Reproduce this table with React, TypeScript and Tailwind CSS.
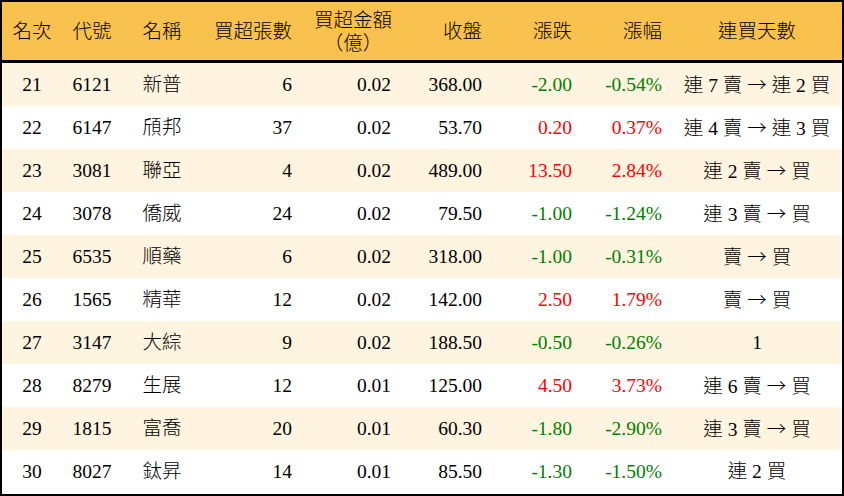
type Row = {
  rank: number
  code: string
  name: string
  lots: number
  amount: string
  close: string
  change: string
  pct: string
  streak: string
}

const rows: Row[] = [
  { rank: 21, code: "6121", name: "新普", lots: 6, amount: "0.02", close: "368.00", change: "-2.00", pct: "-0.54%", streak: "連 7 賣 → 連 2 買" },
  { rank: 22, code: "6147", name: "頎邦", lots: 37, amount: "0.02", close: "53.70", change: "0.20", pct: "0.37%", streak: "連 4 賣 → 連 3 買" },
  { rank: 23, code: "3081", name: "聯亞", lots: 4, amount: "0.02", close: "489.00", change: "13.50", pct: "2.84%", streak: "連 2 賣 → 買" },
  { rank: 24, code: "3078", name: "僑威", lots: 24, amount: "0.02", close: "79.50", change: "-1.00", pct: "-1.24%", streak: "連 3 賣 → 買" },
  { rank: 25, code: "6535", name: "順藥", lots: 6, amount: "0.02", close: "318.00", change: "-1.00", pct: "-0.31%", streak: "賣 → 買" },
  { rank: 26, code: "1565", name: "精華", lots: 12, amount: "0.02", close: "142.00", change: "2.50", pct: "1.79%", streak: "賣 → 買" },
  { rank: 27, code: "3147", name: "大綜", lots: 9, amount: "0.02", close: "188.50", change: "-0.50", pct: "-0.26%", streak: "1" },
  { rank: 28, code: "8279", name: "生展", lots: 12, amount: "0.01", close: "125.00", change: "4.50", pct: "3.73%", streak: "連 6 賣 → 買" },
  { rank: 29, code: "1815", name: "富喬", lots: 20, amount: "0.01", close: "60.30", change: "-1.80", pct: "-2.90%", streak: "連 3 賣 → 買" },
  { rank: 30, code: "8027", name: "鈦昇", lots: 14, amount: "0.01", close: "85.50", change: "-1.30", pct: "-1.50%", streak: "連 2 買" },
]

const cols = "grid grid-cols-[60px_60px_80px_100px_99px_91px_90px_90px_170px]"

// arrow drawn with the CJK font so it gets the wide full-width glyph
function Streak({ text }: { text: string }) {
  const parts = text.split("→")
  return (
    <>
      {parts.map((p, i) => (
        <span key={i}>
          {i > 0 && <span className="font-['Noto_Sans_CJK_TC',sans-serif]">→</span>}
          {p}
        </span>
      ))}
    </>
  )
}

export default function App() {
  return (
    <div className="w-[844px] h-[496px] border-2 border-black bg-white text-black text-[19.5px] font-light font-['Liberation_Serif','Noto_Sans_CJK_TC',serif] leading-none">
      {/* header */}
      <div className={`${cols} h-[61px] bg-[#f9c14e] border-b-[3px] border-black items-center`}>
        <div className="text-center pt-[2px]">名次</div>
        <div className="text-center pt-[2px]">代號</div>
        <div className="text-center pt-[2px]">名稱</div>
        <div className="text-right pr-[10px] pt-[2px]">買超張數</div>
        <div className="text-right pr-[9px]">
          <div className="inline-block text-center leading-[23px] pt-[1px]">
            買超金額
            <br />
            （億）
          </div>
        </div>
        <div className="text-right pr-[10px] pt-[2px]">收盤</div>
        <div className="text-right pr-[10px] pt-[2px]">漲跌</div>
        <div className="text-right pr-[10px] pt-[2px]">漲幅</div>
        <div className="text-center pt-[2px]">連買天數</div>
      </div>

      {/* rows */}
      {rows.map((r, i) => {
        const tone = r.change.startsWith("-") ? "text-[#008000]" : "text-[#ff0000]"
        return (
          <div
            key={r.rank}
            className={`${cols} items-center ${i === rows.length - 1 ? "h-[44px]" : "h-[43px]"} ${i % 2 === 0 ? "bg-[#fef4df]" : "bg-white"}`}
          >
            <div className="text-center">{r.rank}</div>
            <div className="text-center">{r.code}</div>
            <div className="text-center">{r.name}</div>
            <div className="text-right pr-[10px]">{r.lots}</div>
            <div className="text-right pr-[10px]">{r.amount}</div>
            <div className="text-right pr-[10px]">{r.close}</div>
            <div className={`text-right pr-[10px] ${tone}`}>{r.change}</div>
            <div className={`text-right pr-[10px] ${tone}`}>{r.pct}</div>
            <div className="text-center whitespace-pre">
              <Streak text={r.streak} />
            </div>
          </div>
        )
      })}
    </div>
  )
}
